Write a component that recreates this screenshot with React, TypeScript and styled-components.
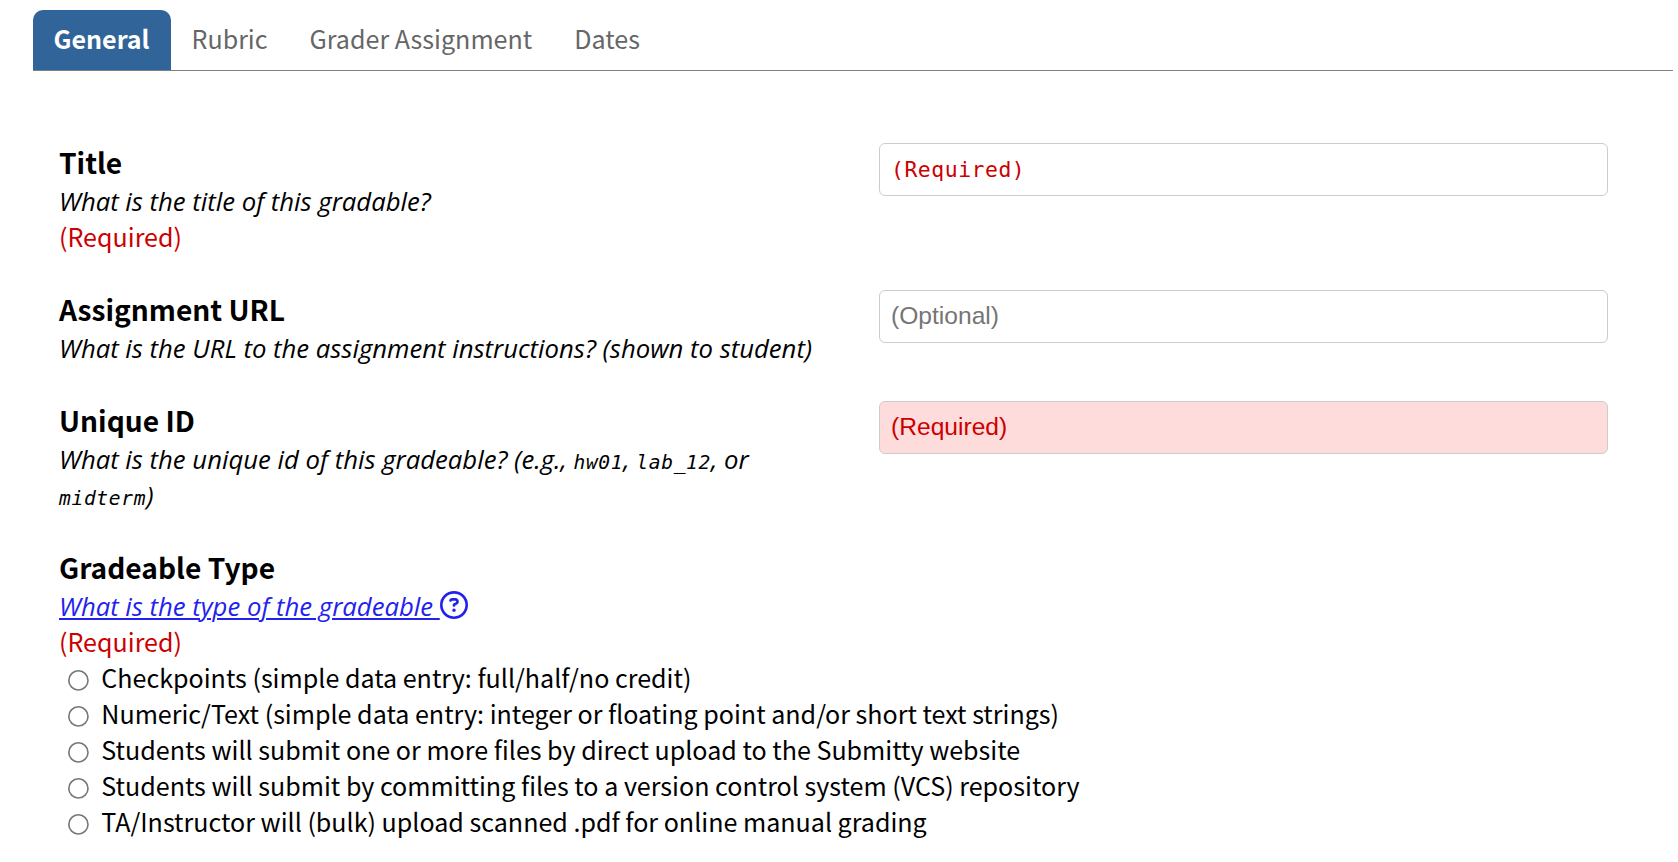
import React from 'react';
import styled, { createGlobalStyle } from 'styled-components';
import { FaRegCircleQuestion } from 'react-icons/fa6';

const sans = '"Noto Sans CJK SC", "Noto Sans", sans-serif';
const mono = '"DejaVu Sans Mono", "Liberation Mono", monospace';

const GlobalStyle = createGlobalStyle`
  * { box-sizing: border-box; }
  body {
    margin: 0;
    background: #fff;
    color: #000;
    font-family: ${sans};
    font-size: 25.07px;
    line-height: 36px;
  }
`;

const Page = styled.main`
  padding: 10px 5px 0 33px;
`;

const TabBar = styled.nav`
  display: flex;
  height: 61px;
  border-bottom: 1px solid #808080;
`;

const Tab = styled.button<{ $active?: boolean }>`
  margin: 0;
  padding: 10px 21px 14px ${p => (p.$active ? '20.5px' : '21px')};
  border: 0;
  border-radius: 10px 10px 0 0;
  background: ${p => (p.$active ? '#316498' : 'transparent')};
  color: ${p => (p.$active ? '#fff' : '#666')};
  font: inherit;
  font-weight: ${p => (p.$active ? 700 : 400)};
  white-space: nowrap;
`;

const Form = styled.form`
  display: flex;
  flex-direction: column;
  gap: 35px;
  padding: 71px 65px 0 26px;
`;

const Field = styled.section`
  display: grid;
  grid-template-columns: 765px 729px;
  justify-content: space-between;
  align-items: start;
`;

const Heading = styled.h2`
  margin: 0;
  font-size: 28.15px;
  line-height: 40px;
  font-weight: 700;
`;

const Description = styled.div`
  min-height: 36px;
`;

const Italic = styled.em`
  font-family: "Open Sans", "Noto Sans", sans-serif;
  font-size: 25.69px;
  font-weight: 370;
  line-height: 1;
`;

const Code = styled.code`
  font-family: ${mono};
  font-size: 19.6px;
  font-weight: 400;
  letter-spacing: 0.65px;
  line-height: 1;
`;

const Required = styled.div`
  color: #c00;
`;

const HelpLink = styled.a`
  display: flex;
  align-items: flex-start;
  height: 36px;
  color: #2222ee;
  text-decoration: none;

  span {
    white-space: pre;
    text-decoration: underline;
    text-decoration-thickness: 2px;
    text-underline-offset: 2px;
  }

  svg {
    width: 28px;
    height: 28px;
    margin-top: 4px;
  }
`;

const TextInput = styled.input<{ $tone: 'required' | 'optional'; $invalid?: boolean; $mono?: boolean }>`
  width: 100%;
  height: 53px;
  margin: 1px 0 0;
  padding: 0 11px 1px;
  border: 1px solid #ccc;
  border-radius: 6px;
  background: ${p => (p.$invalid ? '#ffdcdc' : '#fff')};
  font-family: ${p => (p.$mono ? mono : '"Liberation Sans", Arial, sans-serif')};
  font-size: ${p => (p.$mono ? '21.4px' : '24.6px')};
  letter-spacing: ${p => (p.$mono ? '0.55px' : 'normal')};

  &::placeholder {
    color: ${p => (p.$tone === 'required' ? '#c00' : '#757575')};
    opacity: 1;
  }
`;

const Option = styled.label`
  display: flex;
  align-items: flex-start;
  gap: 12.5px;
  height: 36px;
  padding-left: 9px;
  white-space: nowrap;
`;

const Radio = styled.input`
  flex: none;
  zoom: 1.6;
  width: 13px;
  height: 13px;
  margin: 7px 0 0;
`;

const tabs = ['General', 'Rubric', 'Grader Assignment', 'Dates'];

const gradeableTypes = [
  'Checkpoints (simple data entry: full/half/no credit)',
  'Numeric/Text (simple data entry: integer or floating point and/or short text strings)',
  'Students will submit one or more files by direct upload to the Submitty website',
  'Students will submit by committing files to a version control system (VCS) repository',
  'TA/Instructor will (bulk) upload scanned .pdf for online manual grading',
];

export default function App() {
  return (
    <>
      <GlobalStyle />
      <Page>
        <TabBar>
          {tabs.map((name, i) => (
            <Tab key={name} type="button" $active={i === 0}>{name}</Tab>
          ))}
        </TabBar>
        <Form>
          <Field>
            <div>
              <Heading>Title</Heading>
              <Description><Italic>What is the title of this gradable?</Italic></Description>
              <Required>(Required)</Required>
            </div>
            <TextInput $tone="required" $mono placeholder="(Required)" />
          </Field>
          <Field>
            <div>
              <Heading>Assignment URL</Heading>
              <Description>
                <Italic>What is the URL to the assignment instructions? (shown to student)</Italic>
              </Description>
            </div>
            <TextInput $tone="optional" placeholder="(Optional)" />
          </Field>
          <Field>
            <div>
              <Heading>Unique ID</Heading>
              <Description>
                <Italic>
                  What is the unique id of this gradeable? (e.g., <Code>hw01</Code>, <Code>lab_12</Code>, or{' '}
                  <Code>midterm</Code>)
                </Italic>
              </Description>
            </div>
            <TextInput $tone="required" $invalid placeholder="(Required)" />
          </Field>
          <section>
            <Heading>Gradeable Type</Heading>
            <HelpLink href="#">
              <div><Italic><span>What is the type of the gradeable </span></Italic></div>
              <FaRegCircleQuestion />
            </HelpLink>
            <Required>(Required)</Required>
            {gradeableTypes.map(label => (
              <Option key={label}>
                <Radio type="radio" name="gradeable-type" />
                {label}
              </Option>
            ))}
          </section>
        </Form>
      </Page>
    </>
  );
}
